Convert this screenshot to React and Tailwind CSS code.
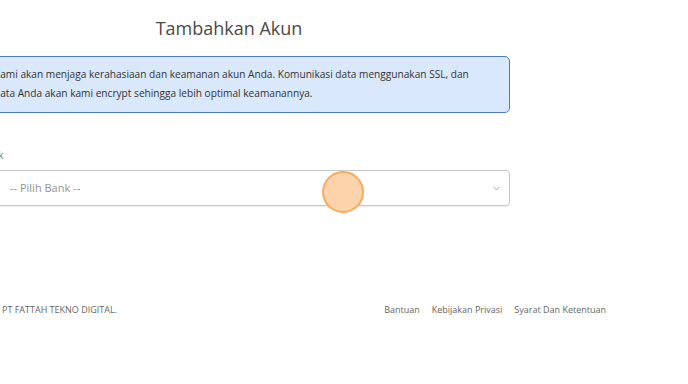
import React from 'react';
import { ChevronDown } from 'lucide-react';

export default function App() {
  return (
    <div className="relative w-[688px] h-[384px] overflow-hidden bg-white font-['Open_Sans',sans-serif]">
      <div className="w-[458px] pt-[16px] text-center">
        <h1 className="text-[18px] leading-[24px] text-[#4a4a4a]">Tambahkan Akun</h1>
      </div>

      <div className="ml-[-22px] w-[532px] mt-[16px]">
        <div className="rounded-[5px] border border-[#4d7bc4] bg-[#dae8fc] pl-[15px] pr-[8px] pt-[8px] pb-[9px] text-[10.15px] leading-[19px] text-[#333]">
          Kami akan menjaga kerahasiaan dan keamanan akun Anda. Komunikasi data menggunakan SSL, dan
          <br />
          data Anda akan kami encrypt sehingga lebih optimal keamanannya.
        </div>

        <div className="mt-[35px]">
          <label className="block ml-[2px] text-[10px] leading-[14px] text-[#777]">Bank</label>
          <div className="mt-[8px] flex h-[36px] items-center justify-between rounded-[4px] border border-[#c9c9c9] pl-[31px] pr-[7px] shadow-[0_1px_1px_rgba(0,0,0,0.08)]">
            <span className="text-[11px] text-[#939393]">-- Pilih Bank --</span>
            <ChevronDown size={11} strokeWidth={1.6} className="text-[#888]" />
          </div>
        </div>
      </div>

      <div className="mt-[97px] flex w-[606px] items-center justify-between pl-[2px] text-[9px] text-[#666]">
        <span>PT FATTAH TEKNO DIGITAL.</span>
        <div className="flex gap-[12px]">
          <span>Bantuan</span>
          <span>Kebijakan Privasi</span>
          <span>Syarat Dan Ketentuan</span>
        </div>
      </div>

      <div className="absolute left-[322px] top-[171px] h-[42px] w-[42px] rounded-full border-2 border-[#f9ab5c] bg-[#fdd3ac]" />
    </div>
  );
}
